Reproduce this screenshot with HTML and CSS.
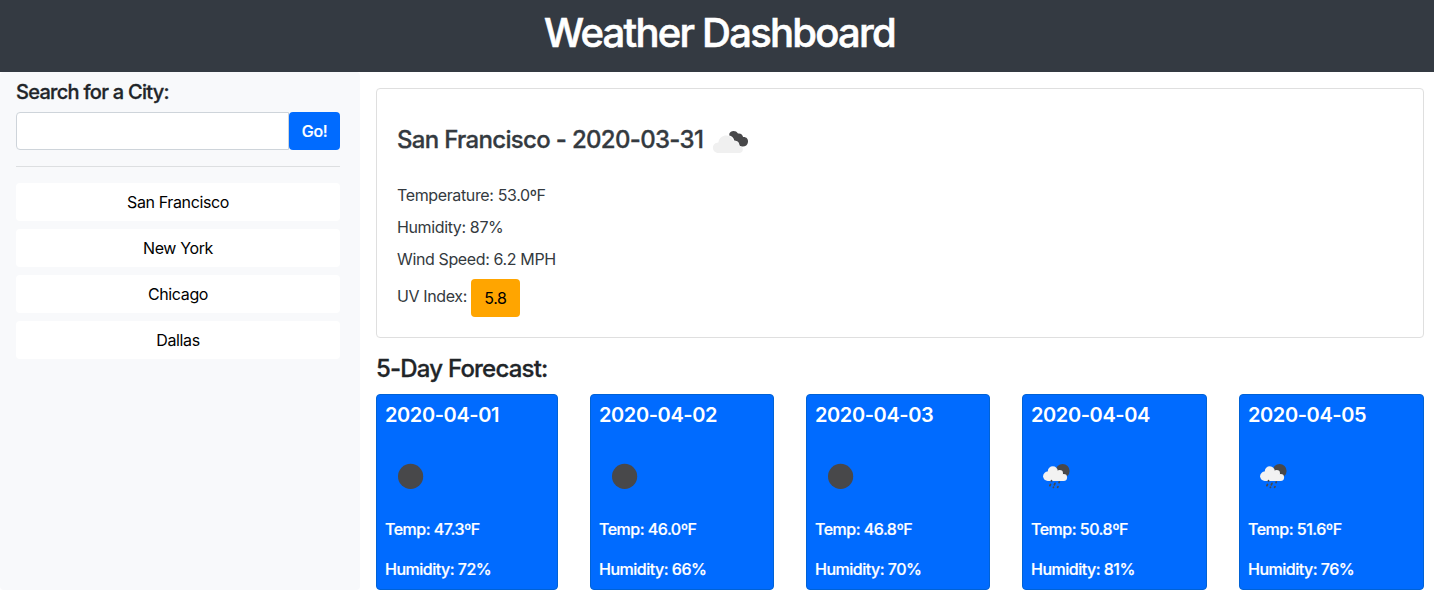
FILE: index.html
```html
<!DOCTYPE html>
<html lang="en">
<head>
<meta charset="utf-8">
<title>Weather Dashboard</title>
<link rel="stylesheet" href="styles.css">
</head>
<body>
<svg class="defs" width="0" height="0" aria-hidden="true">
  <symbol id="moon" viewBox="0 0 50 50"><circle cx="25.6" cy="25.4" r="12.6" fill="#48484a"/></symbol>
  <symbol id="rain" viewBox="0 0 50 50">
    <circle cx="31.600" cy="19.900" r="7" fill="#48484a"/>
    <g fill="#f2f2f2">
      <circle cx="21.800" cy="20.300" r="5"/><circle cx="28.700" cy="22.300" r="3.300"/><circle cx="32.700" cy="26.500" r="3.400"/><circle cx="16.800" cy="25.300" r="4.700"/>
      <path d="M16.800 22h13l3 4v3.900h-16z"/>
    </g>
    <path d="M20.500 29.600v.3M24 32.300l-.7 1.500M28.300 31l-.3.600M19.500 33.400l-.6 1.300M22.500 36.200l-.1.200M27 35.700l-.4.600" stroke="#48484a" stroke-width="1.700" stroke-linecap="round"/>
  </symbol>
  <symbol id="clouds" viewBox="0 0 50 50">
    <path d="M22.300 19.800c.9-3.500 6.700-4 8.700-.3 2.800-.4 4.700 1.200 5.100 3.600 3.500-.2 5.200 2.100 4.900 4.900-.4 3.700-4 5.400-7.200 4.200-1.100-.3-1.700-1.100-1.700-2-.3-2.300-2.200-3.500-4.700-3.500-.8-3.200-2.900-4.600-5.100-5.100z" fill="#48484a"/>
    <path d="M11.800 39c-7.600 0-7.800-10.300-.4-10.500.9-8.400 12.300-9.800 15-1.700 3.900-.5 6.200 1.900 6 4.900 4.900.8 4.500 7.300-.3 7.300z" fill="#f0f0f0"/>
  </symbol>
</svg>
<header class="banner"><h1>Weather Dashboard</h1></header>
<div class="layout">
  <aside class="sidebar">
    <h2 class="search-title">Search for a City:</h2>
    <form class="search"><input class="search-input" type="text" aria-label="City"><button class="search-button" type="button">Go!</button></form>
    <hr class="rule">
    <div class="cities">
      <button class="city">San Francisco</button>
      <button class="city">New York</button>
      <button class="city">Chicago</button>
      <button class="city">Dallas</button>
    </div>
  </aside>
  <main class="main">
    <section class="current">
      <h3 class="current-title"><span>San Francisco - 2020-03-31</span><svg class="icon"><use href="#clouds"/></svg></h3>
      <p class="line">Temperature: 53.0ºF</p>
      <p class="line">Humidity: 87%</p>
      <p class="line">Wind Speed: 6.2 MPH</p>
      <p class="line uv"><span>UV Index:</span><span class="uv-value">5.8</span></p>
    </section>
    <h3 class="forecast-title">5-Day Forecast:</h3>
    <section class="forecast">
      <article class="day"><h4>2020-04-01</h4><svg class="icon"><use href="#moon"/></svg><p>Temp: 47.3ºF</p><p>Humidity: 72%</p></article>
      <article class="day"><h4>2020-04-02</h4><svg class="icon"><use href="#moon"/></svg><p>Temp: 46.0ºF</p><p>Humidity: 66%</p></article>
      <article class="day"><h4>2020-04-03</h4><svg class="icon"><use href="#moon"/></svg><p>Temp: 46.8ºF</p><p>Humidity: 70%</p></article>
      <article class="day"><h4>2020-04-04</h4><svg class="icon"><use href="#rain"/></svg><p>Temp: 50.8ºF</p><p>Humidity: 81%</p></article>
      <article class="day"><h4>2020-04-05</h4><svg class="icon"><use href="#rain"/></svg><p>Temp: 51.6ºF</p><p>Humidity: 76%</p></article>
    </section>
  </main>
</div>
</body>
</html>
```
FILE: styles.css
```css
* { box-sizing: border-box; }
body { margin: 0; background: #fff; color: #212529; font: 400 16px/24px Inter, "Liberation Sans", sans-serif; letter-spacing: -0.37px; overflow: hidden; }
h1, h2, h3, h4, p { margin: 0; font-weight: 500; }
h1, h2, h3 { -webkit-text-stroke: 0.3px currentColor; }
button, input { font: inherit; letter-spacing: inherit; }
.defs { position: absolute; }
.icon { display: block; width: 50px; height: 50px; }
.banner { height: 72px; padding: 9px 0 0 5px; background: #343a42; color: #fff; text-align: center; }
.banner h1 { font-size: 40px; line-height: 48px; letter-spacing: -1.75px; -webkit-text-stroke-width: 0.6px; }
.layout { display: grid; grid-template-columns: 360px 1fr; height: 518px; }
.sidebar { padding: 8px 20px 0 16px; background: #f8f9fb; border-radius: 4px; }
.search-title { font-size: 20px; line-height: 24px; margin-bottom: 8px; letter-spacing: -0.72px; }
.search { display: flex; height: 38px; }
.search-input { flex: 1; min-width: 0; border: 1px solid #ced4da; border-radius: 4px 0 0 4px; background: #fff; }
.search-button { width: 51px; padding: 0; border: 0; border-radius: 4px; background: #006bff; color: #fff; font-weight: 500; -webkit-text-stroke: 0.2px currentColor; }
.rule { margin: 16px 0; border: 0; border-top: 1px solid #dddfe1; }
.cities { display: grid; gap: 8px; }
.city { height: 38px; padding: 0; border: 0; border-radius: 4px; background: #fff; color: #000; }
.main { padding: 16px 10px 0 16px; }
.current { height: 250px; padding: 20px; border: 1px solid #dfdfdf; border-radius: 4px; color: #343a40; }
.current-title { display: flex; align-items: center; gap: 4px; height: 50px; margin: 5px 0 19px; font-size: 24px; line-height: 29px; letter-spacing: -0.68px; }
.line { height: 24px; margin-bottom: 8px; font-weight: 400; }
.uv { display: flex; align-items: flex-start; gap: 4px; height: 38px; margin: 0; }
.uv span:first-child { margin-top: 5px; }
.uv-value { width: 49px; height: 38px; border-radius: 4px; background: #ffa500; color: #000; line-height: 38px; text-align: center; }
.forecast-title { margin: 16px 0 11px; font-size: 24px; line-height: 29px; letter-spacing: -0.8px; }
.forecast { display: grid; grid-template-columns: 182px 184px 184px 185px 185px; gap: 32px; height: 196px; }
.day { padding: 8px; border: 1px solid #0062d6; border-radius: 4px; background: #006bff; color: #fff; }
.day h4 { height: 24px; margin-bottom: 24px; font-size: 20px; line-height: 24px; font-weight: 600; letter-spacing: -0.4px; }
.day p { margin-top: 16px; letter-spacing: -0.5px; -webkit-text-stroke: 0.2px currentColor; }
```
